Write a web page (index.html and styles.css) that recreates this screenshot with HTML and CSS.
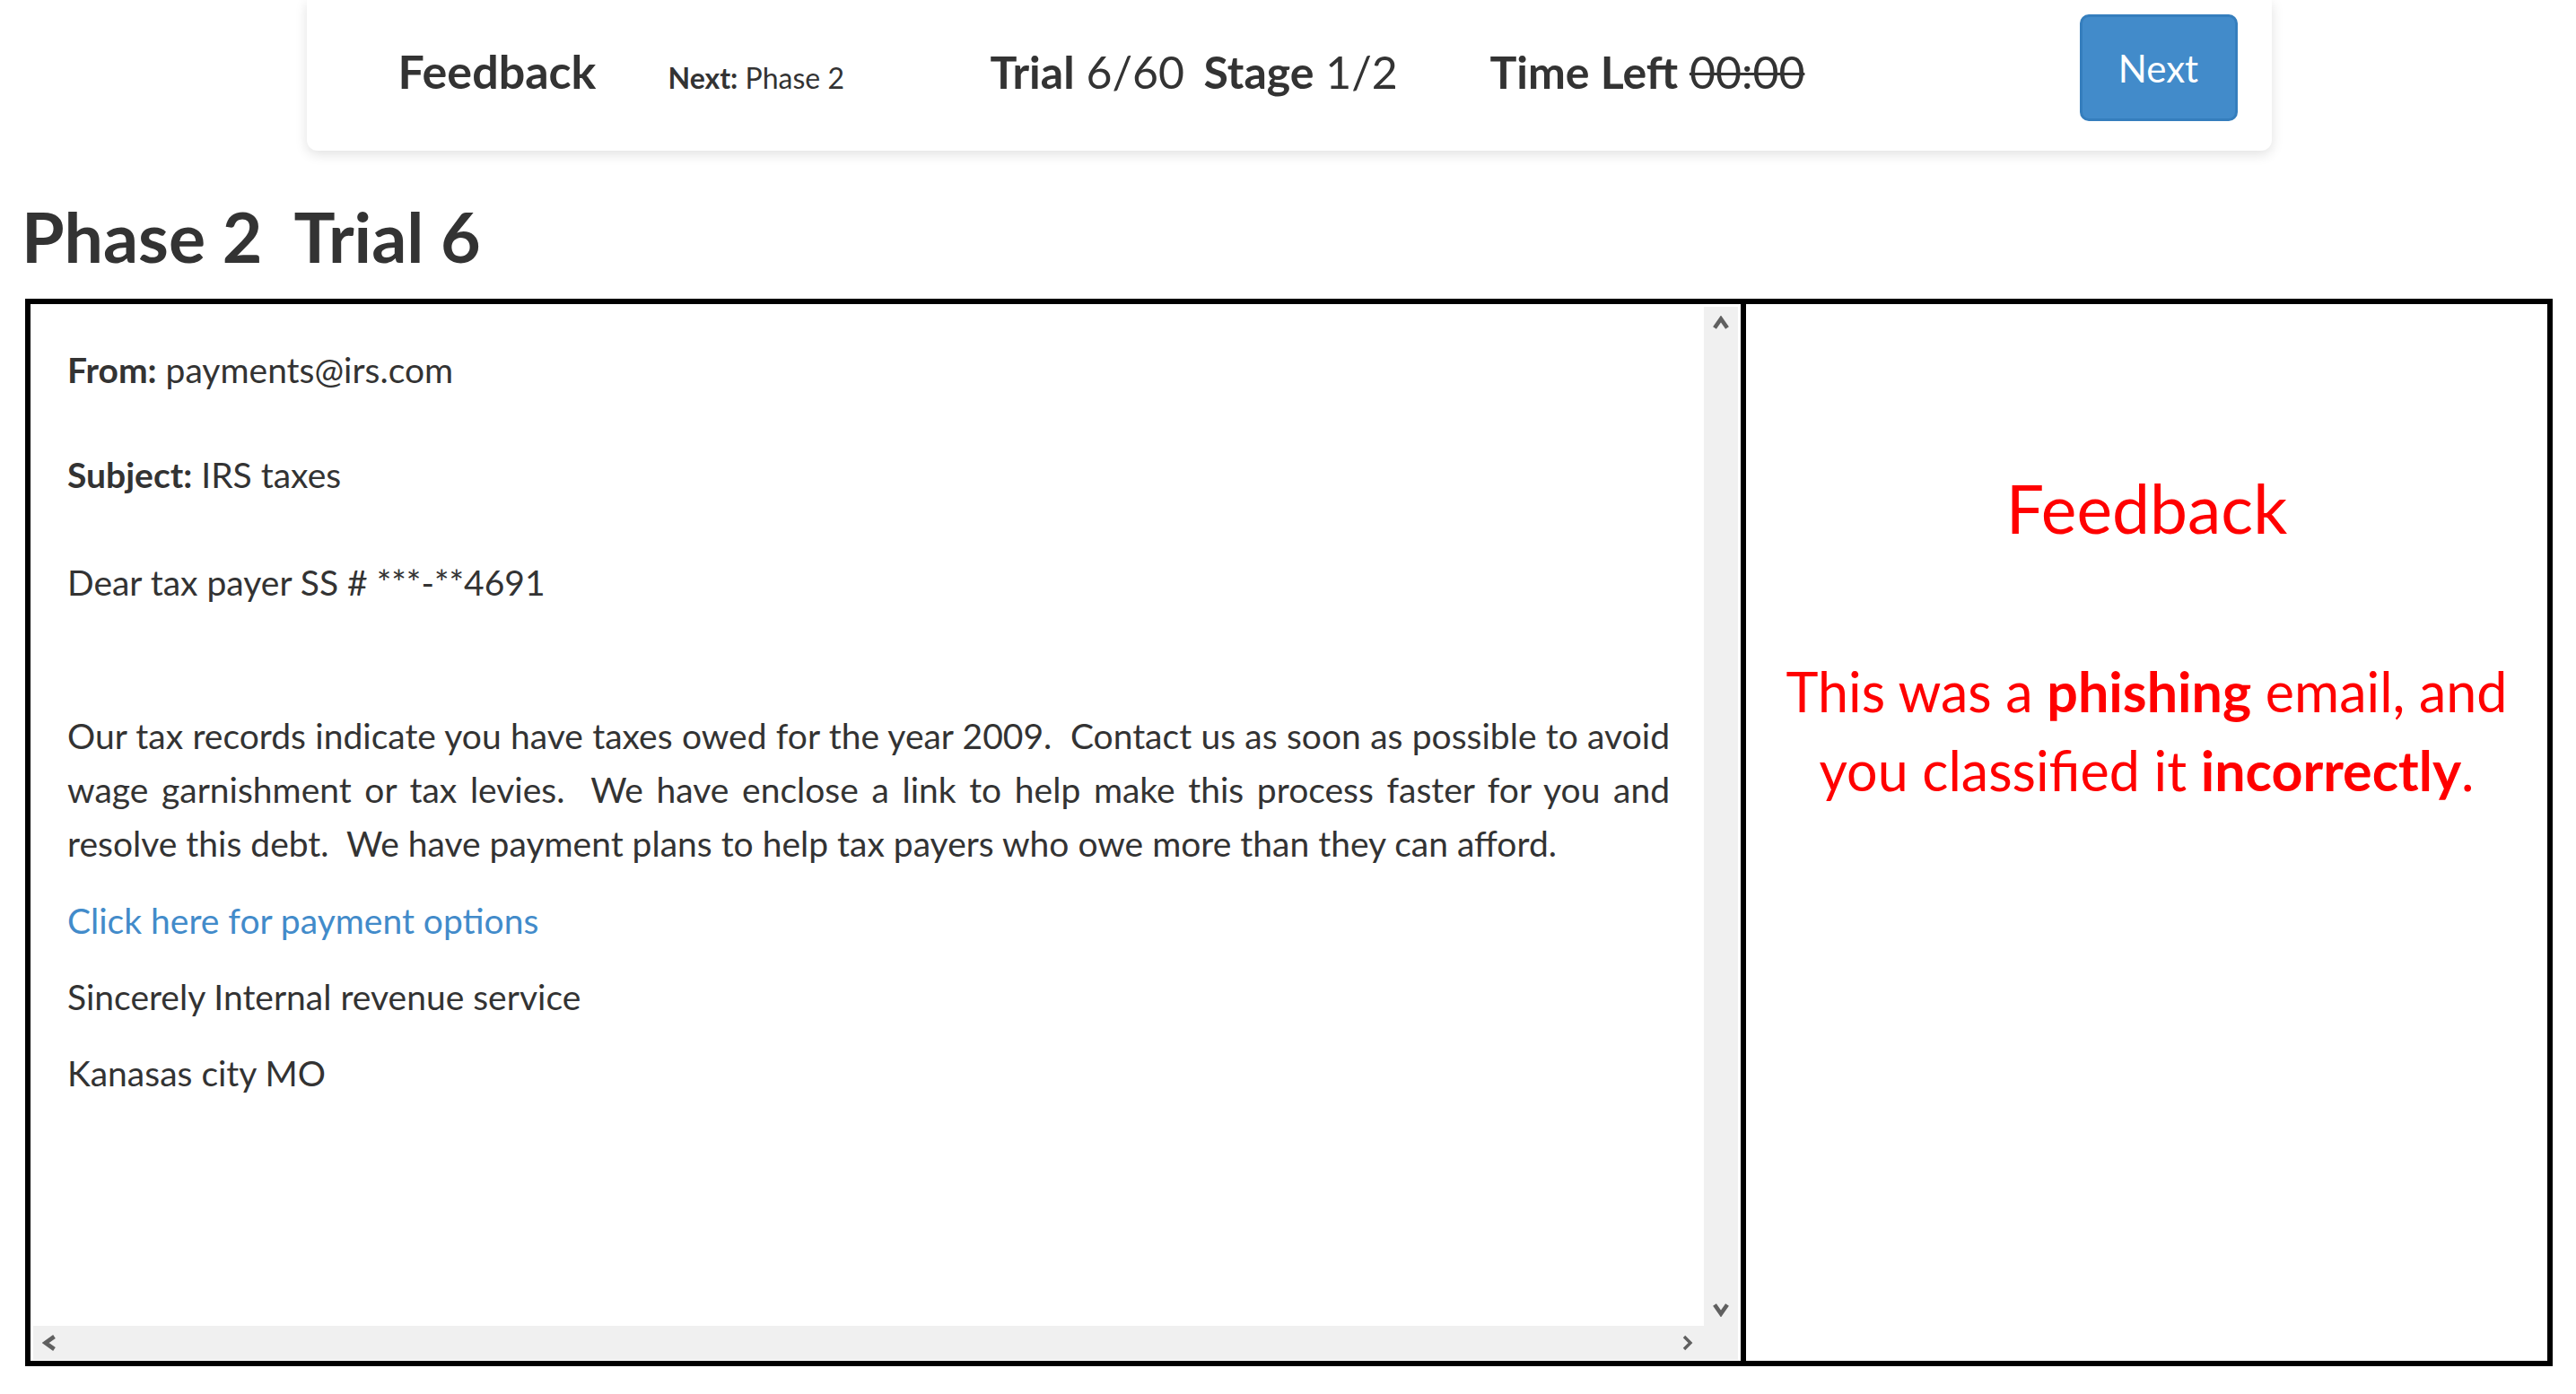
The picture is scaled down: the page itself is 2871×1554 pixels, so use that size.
FILE: index.html
```html
<!DOCTYPE html>
<html lang="en">
<head>
<meta charset="utf-8">
<title>Phase 2 Trial 6</title>
<link rel="stylesheet" href="styles.css">
</head>
<body>
<header class="topbar">
  <div class="topbar-info">
    <div class="tb-item tb-title">Feedback</div>
    <div class="tb-item tb-next"><b>Next:</b> Phase 2</div>
    <div class="tb-item tb-trial"><b>Trial</b> 6/60</div>
    <div class="tb-item tb-stage"><b>Stage</b> 1/2</div>
    <div class="tb-item tb-time"><b>Time Left</b> <s>00:00</s></div>
  </div>
  <button class="btn-next" type="button">Next</button>
</header>

<h1 class="page-title">Phase 2&nbsp; Trial 6</h1>

<main class="trial-box">
  <section class="email-pane">
    <div class="email-content">
      <p class="em-from"><b>From:</b> payments@irs.com</p>
      <p class="em-subject"><b>Subject:</b> IRS taxes</p>
      <p class="em-greeting">Dear tax payer SS # ***-**4691</p>
      <p class="em-body">Our tax records indicate you have taxes owed for the year 2009.&nbsp; Contact us as soon as possible to avoid wage garnishment or tax levies.&nbsp; We have enclose a link to help make this process faster for you and resolve this debt.&nbsp; We have payment plans to help tax payers who owe more than they can afford.</p>
      <p class="em-line"><a class="em-link" href="#">Click here for payment options</a></p>
      <p class="em-line">Sincerely Internal revenue service</p>
      <p class="em-line">Kanasas city MO</p>
    </div>
    <div class="vscroll">
      <svg class="chev" width="18" height="15" viewBox="0 0 18 15"><polyline points="2,13.5 9,3.5 16,13.5" fill="none" stroke="#606060" stroke-width="4.6"/></svg>
      <svg class="chev" width="18" height="15" viewBox="0 0 18 15"><polyline points="2,1.5 9,11.5 16,1.5" fill="none" stroke="#606060" stroke-width="4.6"/></svg>
    </div>
    <div class="hscroll">
      <svg class="chev" width="16" height="18" viewBox="0 0 16 18"><polyline points="13.5,2 3.5,9 13.5,16" fill="none" stroke="#606060" stroke-width="4.6"/></svg>
      <svg class="chev" width="16" height="18" viewBox="0 0 16 18"><polyline points="4,2 11,9 4,16" fill="none" stroke="#606060" stroke-width="3.4"/></svg>
    </div>
    <div class="scroll-corner"></div>
  </section>
  <section class="feedback-pane">
    <h2 class="fb-title">Feedback</h2>
    <p class="fb-text">This was a <b>phishing</b> email, and<br>you classified it <b>incorrectly</b>.</p>
  </section>
</main>
</body>
</html>
```

FILE: styles.css
```css
html, body {
  margin: 0;
  background: #ffffff;
}

body {
  font-family: "Lato", "Source Sans Pro", "Noto Sans", sans-serif;
  color: #333333;
  padding: 0 26px 0 28px;
}

/* ---------- top bar ---------- */
.topbar {
  width: 2190px;
  height: 168px;
  margin: 0 auto;
  box-sizing: border-box;
  display: flex;
  align-items: flex-start;
  padding: 0 38px 0 102px;
  background: #ffffff;
  border-radius: 0 0 12px 12px;
  box-shadow: 0 4px 14px rgba(0, 0, 0, 0.12);
}

.topbar-info {
  display: flex;
  align-items: baseline;
  margin-top: 48px;
}

.tb-item {
  flex: none;
  font-size: 50px;
  line-height: 1.2;
  white-space: nowrap;
}

.tb-item b {
  font-weight: 700;
}

.tb-title {
  width: 301px;
  font-size: 52px;
  font-weight: 700;
}

.tb-next {
  width: 359px;
  font-size: 32px;
}

.tb-trial {
  width: 238px;
}

.tb-stage {
  width: 319px;
}

.tb-time s {
  text-decoration-thickness: 3px;
}

.btn-next {
  flex: none;
  margin-left: auto;
  margin-top: 16px;
  width: 176px;
  height: 119px;
  box-sizing: border-box;
  background: #428bca;
  border: 3px solid #357ebd;
  border-radius: 10px;
  color: #ffffff;
  font-family: "Lato", "Source Sans Pro", "Noto Sans", sans-serif;
  font-size: 42px;
  line-height: 1;
  padding: 0;
  cursor: pointer;
}

/* ---------- heading ---------- */
.page-title {
  font-size: 77px;
  font-weight: 700;
  line-height: 1.1;
  margin: 53px 0 27px -4px;
  white-space: pre;
}

/* ---------- main box ---------- */
.trial-box {
  display: flex;
  height: 1190px;
  box-sizing: border-box;
  border: 6px solid #000000;
}

.email-pane {
  flex: none;
  width: 1912px;
  box-sizing: border-box;
  border-right: 6px solid #000000;
  padding: 3px 3px 1px 3px;
  display: grid;
  grid-template-columns: 1fr 38px;
  grid-template-rows: 1fr 38px;
  min-height: 0;
}

.email-content {
  overflow: hidden;
  min-height: 0;
  padding: 40px 38px 0 38px;
  font-size: 39px;
  line-height: 60px;
}

.email-content p {
  margin: 0;
}

.email-content b {
  font-weight: 700;
}

.em-from {
  margin-bottom: 57px !important;
}

.em-subject {
  margin-bottom: 60px !important;
}

.em-greeting {
  margin-bottom: 111px !important;
}

.em-body {
  text-align: justify;
  margin-bottom: 26px !important;
}

.em-line {
  margin-bottom: 25px !important;
}

.em-link {
  color: #428bca;
  text-decoration: none;
}

.vscroll {
  background: #f0f0f0;
  display: flex;
  flex-direction: column;
  justify-content: space-between;
  align-items: center;
  padding: 10px 0;
}

.hscroll {
  background: #f0f0f0;
  display: flex;
  justify-content: space-between;
  align-items: center;
  padding: 0 10px;
}

.scroll-corner {
  background: #f0f0f0;
}

.chev {
  display: block;
}

/* ---------- feedback pane ---------- */
.feedback-pane {
  flex: 1;
  min-width: 0;
  text-align: center;
  color: #ff0000;
  padding: 186px 10px 0;
}

.fb-title {
  font-size: 75px;
  font-weight: 400;
  line-height: 1.1;
  margin: 0;
}

.fb-text {
  font-size: 61px;
  line-height: 88px;
  margin: 120px 0 0;
  white-space: nowrap;
}

.fb-text b {
  font-weight: 700;
}
```
